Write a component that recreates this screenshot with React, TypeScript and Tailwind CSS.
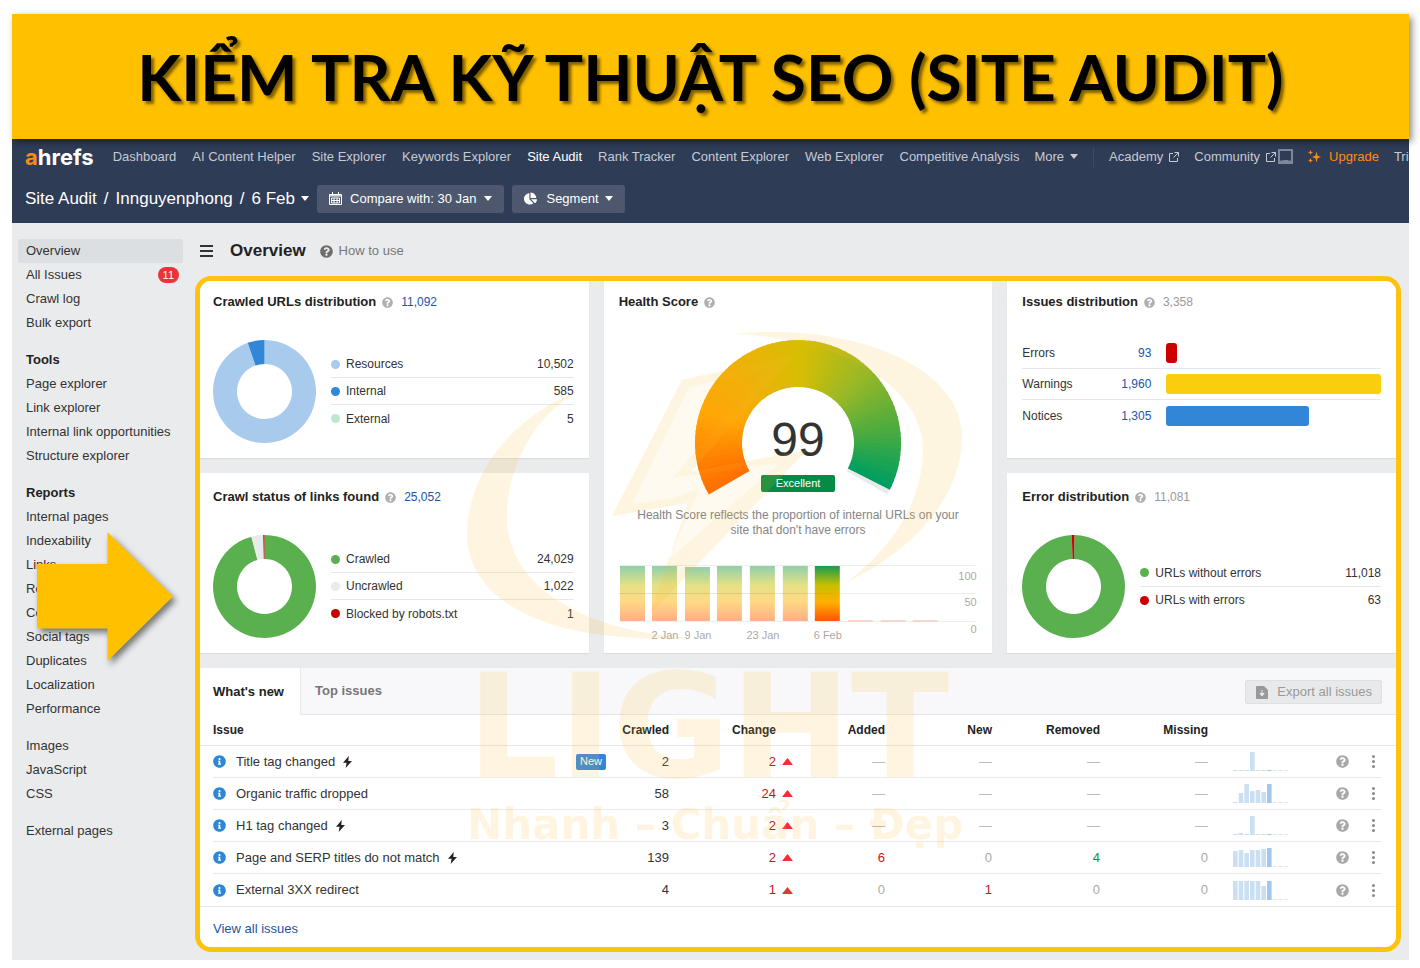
import type { ReactNode } from "react";
import clsx from "clsx";
import { FaChartPie, FaInfoCircle, FaQuestionCircle } from "react-icons/fa";

interface Slice {
  label: string;
  value: string;
  share: number;
  color: string;
}

interface Issue {
  name: string;
  bolt?: boolean;
  isNew?: boolean;
  crawled: number;
  change: number;
  added: number | null;
  fresh: number | null;
  removed: number | null;
  missing: number | null;
  trend: number[];
}

const navItems = [
  "Dashboard",
  "AI Content Helper",
  "Site Explorer",
  "Keywords Explorer",
  "Site Audit",
  "Rank Tracker",
  "Content Explorer",
  "Web Explorer",
  "Competitive Analysis",
];

const sidebarGroups: { title?: string; items: string[] }[] = [
  { items: ["Overview", "All Issues", "Crawl log", "Bulk export"] },
  {
    title: "Tools",
    items: [
      "Page explorer",
      "Link explorer",
      "Internal link opportunities",
      "Structure explorer",
    ],
  },
  {
    title: "Reports",
    items: [
      "Internal pages",
      "Indexability",
      "Links",
      "Redirects",
      "Content",
      "Social tags",
      "Duplicates",
      "Localization",
      "Performance",
    ],
  },
  { items: ["Images", "JavaScript", "CSS"] },
  { items: ["External pages"] },
];

const crawledUrls: Slice[] = [
  { label: "Resources", value: "10,502", share: 0.947, color: "#a8cbed" },
  { label: "Internal", value: "585", share: 0.053, color: "#3186d8" },
  { label: "External", value: "5", share: 0, color: "#bfe6d0" },
];

const crawlStatus: Slice[] = [
  { label: "Crawled", value: "24,029", share: 0.959, color: "#5ab04f" },
  { label: "Uncrawled", value: "1,022", share: 0.037, color: "#e9eaeb" },
  { label: "Blocked by robots.txt", value: "1", share: 0.004, color: "#c80000" },
];

const errorSplit: Slice[] = [
  { label: "URLs without errors", value: "11,018", share: 0.992, color: "#5ab04f" },
  { label: "URLs with errors", value: "63", share: 0.008, color: "#c80000" },
];

const issueLevels = [
  { label: "Errors", value: "93", width: 5, color: "#cc0000" },
  { label: "Warnings", value: "1,960", width: 100, color: "#facd0d" },
  { label: "Notices", value: "1,305", width: 66.6, color: "#3186d8" },
];

const issues: Issue[] = [
  { name: "Title tag changed", bolt: true, isNew: true, crawled: 2, change: 2, added: null, fresh: null, removed: null, missing: null, trend: [1, 1, 1, 19, 1, 1, 1] },
  { name: "Organic traffic dropped", crawled: 58, change: 24, added: null, fresh: null, removed: null, missing: null, trend: [1, 10, 19, 12, 13, 11, 19] },
  { name: "H1 tag changed", bolt: true, crawled: 3, change: 2, added: null, fresh: null, removed: null, missing: null, trend: [1, 2, 1, 19, 1, 1, 1] },
  { name: "Page and SERP titles do not match", bolt: true, crawled: 139, change: 2, added: 6, fresh: 0, removed: 4, missing: 0, trend: [16, 17, 14, 17, 17, 18, 19] },
  { name: "External 3XX redirect", crawled: 4, change: 1, added: 0, fresh: 1, removed: 0, missing: 0, trend: [19, 19, 19, 19, 19, 14, 19] },
];

const gaugeStops: [number, number[]][] = [
  [0, [255, 106, 0]],
  [0.2, [255, 166, 4]],
  [0.38, [234, 180, 8]],
  [0.52, [214, 190, 4]],
  [0.7, [150, 184, 40]],
  [0.85, [78, 172, 62]],
  [1, [0, 158, 96]],
];

function gaugeColor(t: number) {
  const i = Math.max(1, gaugeStops.findIndex(([pos]) => pos >= t));
  const [p0, c0] = gaugeStops[i - 1];
  const [p1, c1] = gaugeStops[i];
  const k = (t - p0) / (p1 - p0);
  return `rgb(${c0.map((c, n) => Math.round(c + (c1[n] - c) * k)).join(",")})`;
}

// Ring segment around 0,0. Angles are in degrees, clockwise from 3 o'clock.
function ring(outer: number, inner: number, from: number, to: number) {
  const pt = (r: number, deg: number) => {
    const a = (deg * Math.PI) / 180;
    return `${(r * Math.cos(a)).toFixed(2)} ${(r * Math.sin(a)).toFixed(2)}`;
  };
  const large = to - from > 180 ? 1 : 0;
  return `M${pt(outer, from)}A${outer} ${outer} 0 ${large} 1 ${pt(outer, to)}L${pt(inner, to)}A${inner} ${inner} 0 ${large} 0 ${pt(inner, from)}Z`;
}

function Caret({ className }: { className?: string }) {
  return (
    <svg viewBox="0 0 8 5" className={clsx("h-[5px] w-2 shrink-0", className)} fill="currentColor">
      <path d="M0 0h8L4 5z" />
    </svg>
  );
}

function ExternalIcon() {
  return (
    <svg viewBox="0 0 10 10" className="size-[10px]" fill="none" stroke="currentColor">
      <path d="M4 1.5H.5v8h8V6M5.5.5h4v4M9.5.5 4.5 5.5" />
    </svg>
  );
}

function Help({ className }: { className: string }) {
  return <FaQuestionCircle className={clsx("shrink-0", className)} />;
}

export default function App() {
  return (
    <div className="bg-white pt-[14px] pr-[11px] pb-2 pl-3 font-['Liberation_Sans',Arial,sans-serif] text-[13px] text-[#333]">
      <header className="relative z-10 flex h-[125px] items-center justify-center bg-[#ffc000] shadow-[3px_3px_7px_rgba(0,0,0,0.45)]">
        <h1 className="whitespace-nowrap font-['Lato','Inter',sans-serif] text-[64px] leading-[74px] font-bold text-black [text-shadow:3px_3px_3px_rgba(0,0,0,0.5)]">
          KIỂM TRA KỸ THUẬT SEO (SITE AUDIT)
        </h1>
      </header>
      <TopBar />
      <div className="relative flex bg-[#eaebed] pb-2">
        <Sidebar />
        <main className="min-w-0 flex-1 pr-2">
          <div className="flex h-[53px] items-center pt-[3px] pl-[5px]">
            <button aria-label="Toggle menu" className="flex flex-col gap-[3px]">
              <span className="h-[2px] w-[13px] bg-[#333]" />
              <span className="h-[2px] w-[13px] bg-[#333]" />
              <span className="h-[2px] w-[13px] bg-[#333]" />
            </button>
            <h2 className="ml-[17px] text-[17px] font-bold text-[#222]">Overview</h2>
            <a href="#how" className="ml-[14px] flex items-center gap-[6px] text-[#777]">
              <Help className="size-[13px] text-[#6d6d6d]" />
              How to use
            </a>
          </div>
          <div className="relative overflow-hidden rounded-[16px] border-[5px] border-[#ffc20e]">
            <Cards />
            <IssuesPanel />
            <Watermark />
          </div>
        </main>
        <svg
          viewBox="0 0 136 129"
          className="absolute top-[309px] left-[25px] w-[136px] drop-shadow-[3px_4px_3px_rgba(0,0,0,0.5)]"
        >
          <path d="M0 32h70.500V0L136 64.500 70.500 129V96.500H0z" fill="#ffc000" />
        </svg>
      </div>
    </div>
  );
}

function TopBar() {
  return (
    <div className="overflow-hidden bg-[#2f3c56] whitespace-nowrap">
      <nav className="flex h-[35px] items-center gap-[15px] pl-[13px] text-[#c6cad2]">
        <a href="#home" className="mr-1 w-[69px] font-['Inter',sans-serif] text-[22px] leading-6 font-bold text-white">
          <span className="text-[#ff8a13]">a</span>hrefs
        </a>
        <div className="flex gap-4">
          {navItems.map((item) => (
            <a key={item} href="#nav" className={item === "Site Audit" ? "text-white" : undefined}>
              {item}
            </a>
          ))}
        </div>
        <button className="flex items-center gap-[6px]">
          More <Caret />
        </button>
        <span className="h-5 w-px shrink-0 bg-[#3f4b63]" />
        <a href="#academy" className="flex items-center gap-[6px]">
          Academy <ExternalIcon />
        </a>
        <a href="#community" className="flex items-center gap-[6px]">
          Community
          <span className="flex items-center">
            <ExternalIcon />
            <svg viewBox="0 0 15 15" className="ml-[2px] size-[15px] text-[#7d8799]" fill="none" stroke="currentColor" strokeWidth="2">
              <path d="M1 1h13v13H1z" />
              <path d="M1 12.500h13M5 12h5" />
            </svg>
          </span>
        </a>
        <a href="#upgrade" className="flex items-center gap-2 text-[#ff8a13]">
          <svg viewBox="0 0 13 13" className="size-[13px]" fill="currentColor">
            <path d="M8.500 1.500 9.600 5.800 13 7l-3.400 1.200-1.100 4.300-1.100-4.300L4 7l3.400-1.200zM2.500 0l.7 1.800L5 2.500l-1.800.7L2.500 5l-.7-1.800L0 2.500l1.800-.7zM2.500 8l.7 1.800 1.800.7-1.800.7L2.500 13l-.7-1.800L0 10.500l1.800-.7z" />
          </svg>
          Upgrade
        </a>
        <span>Trial</span>
      </nav>
      <div className="flex h-[49px] items-center pl-[13px] text-white">
        <div className="flex items-center gap-[7px] text-[17px]">
          <a href="#audit">Site Audit</a>
          <span>/</span>
          <a href="#project">Innguyenphong</a>
          <span>/</span>
          <button className="flex items-center gap-[6px]">
            6 Feb <Caret />
          </button>
        </div>
        <button className="ml-2 flex h-7 items-center rounded-[3px] bg-[#4d586e] px-3">
          <svg viewBox="0 0 13 13" className="size-[13px]" fill="none" stroke="currentColor">
            <path d="M.5 2.500h12v10H.5zM.5 3h12M.5 4h12M3.500 0v3M9.500 0v3" />
            <path d="M2.500 6h8v5h-8zM2.500 8.500h8M5 6v5M8 6v5" />
          </svg>
          <span className="ml-2">Compare with: 30 Jan</span>
          <Caret className="ml-2" />
        </button>
        <button className="ml-2 flex h-7 items-center rounded-[3px] bg-[#4d586e] px-3">
          <FaChartPie className="size-[13px]" />
          <span className="ml-[9px]">Segment</span>
          <Caret className="ml-[6px]" />
        </button>
      </div>
    </div>
  );
}

function Sidebar() {
  return (
    <nav className="w-[183px] shrink-0 pt-4 pr-3 pl-[6px]">
      {sidebarGroups.map((group, i) => (
        <div key={i} className="mb-[13px]">
          {group.title && (
            <h3 className="pl-2 leading-6 font-bold text-[#222]">{group.title}</h3>
          )}
          {group.items.map((item) => (
            <a
              key={item}
              href="#section"
              className={clsx(
                "flex h-6 items-center justify-between rounded-[2px] pr-1 pl-2 whitespace-nowrap",
                item === "Overview" && "bg-[#dcdfe2]",
              )}
            >
              {item}
              {item === "All Issues" && (
                <span className="flex h-4 items-center rounded-full bg-[#eb3338] px-[5px] text-[11px] text-white">
                  11
                </span>
              )}
            </a>
          ))}
        </div>
      ))}
    </nav>
  );
}

function CardTitle({ title, total, link }: { title: string; total?: string; link?: boolean }) {
  return (
    <div className="flex h-5 items-center">
      <h3 className="font-bold text-[#222]">{title}</h3>
      <Help className="ml-[6px] size-[11px] text-[#b0b0b0]" />
      {total &&
        (link ? (
          <a href="#total" className="ml-2 text-[12px] text-[#1a55a5]">{total}</a>
        ) : (
          <span className="ml-2 text-[12px] text-[#999]">{total}</span>
        ))}
    </div>
  );
}

function Donut({ slices }: { slices: Slice[] }) {
  // The last sliver of the error donut straddles 12 o'clock
  let angle = slices.length === 2 ? -89 : -90;
  return (
    <svg viewBox="-51.500 -51.500 103 103" className="size-[103px] shrink-0">
      {slices.map((s) => {
        const from = angle;
        angle += s.share * 360;
        return s.share > 0 && <path key={s.label} d={ring(51.5, 27.5, from, angle)} fill={s.color} />;
      })}
    </svg>
  );
}

function DonutCard({
  title,
  total,
  link,
  slices,
  className,
}: {
  title: string;
  total: string;
  link?: boolean;
  slices: Slice[];
  className: string;
}) {
  return (
    <section className={clsx("bg-white pb-[15px] shadow-[0_1px_1px_rgba(0,0,0,0.06)]", className)}>
      <CardTitle title={title} total={total} link={link} />
      <div className="mt-7 flex items-center gap-[15px]">
        <Donut slices={slices} />
        <ul className="flex-1 divide-y divide-[#e6e7e9] text-[12px]">
          {slices.map((s) => (
            <li key={s.label} className="flex h-[27px] items-center">
              <span className="size-[9px] rounded-full" style={{ background: s.color }} />
              <span className="ml-[6px] flex-1">{s.label}</span>
              <span>{s.value}</span>
            </li>
          ))}
        </ul>
      </div>
    </section>
  );
}

function Cards() {
  return (
    <div className="grid grid-cols-3 gap-[15px] bg-[#eaebed] pb-[15px]">
      <div className="flex flex-col gap-[15px]">
        <DonutCard title="Crawled URLs distribution" total="11,092" link slices={crawledUrls} className="pt-[11px] pr-[15px] pl-[13px]" />
        <DonutCard title="Crawl status of links found" total="25,052" link slices={crawlStatus} className="pt-[14px] pr-[15px] pl-[13px]" />
      </div>
      <HealthCard />
      <div className="flex flex-col gap-[15px]">
        <section className="flex-1 bg-white px-[15px] pt-[11px] shadow-[0_1px_1px_rgba(0,0,0,0.06)]">
          <CardTitle title="Issues distribution" total="3,358" />
          <ul className="mt-[26px] divide-y divide-[#e6e7e9] text-[12px]">
            {issueLevels.map((level) => (
              <li key={level.label} className="flex h-[31px] items-center">
                <span className="w-[84px]">{level.label}</span>
                <a href="#level" className="w-[45px] text-right text-[#1a55a5]">{level.value}</a>
                <span className="ml-[15px] flex-1">
                  <span
                    className="block h-5 rounded-[3px]"
                    style={{ width: `${level.width}%`, background: level.color }}
                  />
                </span>
              </li>
            ))}
          </ul>
        </section>
        <DonutCard title="Error distribution" total="11,081" slices={errorSplit} className="px-[15px] pt-[14px]" />
      </div>
    </div>
  );
}

function HealthCard() {
  const steps = 79;
  return (
    <section className="bg-white px-[15px] pt-[11px] shadow-[0_1px_1px_rgba(0,0,0,0.06)]">
      <CardTitle title="Health Score" />
      <div className="relative mt-7">
        <svg viewBox="-103 -103 206 155" className="mx-auto h-[155px] w-[206px]">
          <path d={ring(103, 56, 26, 30)} fill="#e9eaeb" />
          {Array.from({ length: steps }, (_, i) => {
            const from = -210 + i * 3;
            const to = i === steps - 1 ? from + 3 : from + 4;
            return <path key={i} d={ring(103, 56, from, to)} fill={gaugeColor(i / (steps - 1))} />;
          })}
        </svg>
        <div className="absolute inset-x-0 top-[76px] flex flex-col items-center">
          <span className="text-[48px] leading-[48px] text-[#333]">99</span>
          <span className="mt-[11px] flex h-[17px] items-center rounded-[2px] bg-[#058b45] px-[15px] text-[11px] text-white">
            Excellent
          </span>
        </div>
      </div>
      <p className="mt-[13px] text-center text-[12px] leading-[15px] text-[#858585]">
        Health Score reflects the proportion of internal URLs on your
        <br />
        site that don't have errors
      </p>
      <HistoryChart />
    </section>
  );
}

function HistoryChart() {
  return (
    <svg viewBox="0 0 359 80" className="mt-[26px] w-full">
      <defs>
        <linearGradient id="score" x1="0" y1="0" x2="0" y2="1">
          <stop offset="0" stopColor="#169c50" />
          <stop offset="0.35" stopColor="#c8c000" />
          <stop offset="0.65" stopColor="#ffb000" />
          <stop offset="1" stopColor="#ff5500" />
        </linearGradient>
      </defs>
      <path d="M0 1.500h357M0 29.500h357M0 57.500h357" stroke="#eceded" />
      {[1, 33, 66, 98, 131, 164, 196].map((x, i) => (
        <rect key={x} x={x} y={i === 2 ? 3 : 2} width={25} height={i === 2 ? 54 : 55} fill="url(#score)" opacity={i === 6 ? 1 : 0.48} />
      ))}
      <path d="M0 29.500h215" stroke="#000" strokeOpacity="0.05" />
      <path d="M229 57h25M262 57h25M294 57h25" stroke="#f5b9a0" />
      <g fontSize="11" fill="#aaa" textAnchor="middle">
        <text x="46" y="75">2 Jan</text>
        <text x="79" y="75">9 Jan</text>
        <text x="144" y="75">23 Jan</text>
        <text x="209" y="75">6 Feb</text>
      </g>
      <g fontSize="11" fill="#aaa" textAnchor="end">
        <text x="358" y="16">100</text>
        <text x="358" y="42">50</text>
        <text x="358" y="69">0</text>
      </g>
    </svg>
  );
}

function Sparkline({ values }: { values: number[] }) {
  return (
    <svg viewBox="0 0 56 19" className="h-[19px] w-14">
      {values.map((v, i) => (
        <rect key={i} x={i * 5.67} y={19 - v} width="4.600" height={v} fill={i === 6 ? "#a3c7ea" : "#cbdff3"} />
      ))}
      <path d="M39.500 18.500h4.400M45.200 18.500h4.400M50.900 18.500h4.400" stroke="#e4e7ea" />
    </svg>
  );
}

function Count({ value, tone }: { value: number | null; tone: string }) {
  if (value === null) return <span className="text-[#bbb]">—</span>;
  return <span className={value === 0 ? "text-[#aaa]" : tone}>{value}</span>;
}

function Cell({ children }: { children: ReactNode }) {
  return (
    <td className="border-[#e9eaec] p-0 text-right group-not-last:border-b">
      {children}
    </td>
  );
}

function IssuesPanel() {
  return (
    <section className="bg-white">
      <div className="flex h-[47px] border-b border-[#e6e7e9] bg-[#f8f8fb]">
        <button className="-mb-px w-[101px] border-r border-[#e6e7e9] bg-white pl-[13px] text-left font-bold text-[#222]">
          What's new
        </button>
        <button className="px-[14px] font-bold text-[#777]">Top issues</button>
        <button className="mt-3 mr-[14px] ml-auto flex h-6 items-center gap-2 rounded-[2px] border border-[#dfe0e2] bg-[#e8e9eb] px-[9px] text-[#999]">
          <svg viewBox="0 0 12 13" className="mx-px h-[13px] w-3">
            <path d="M1 0h7l4 4v8a1 1 0 0 1-1 1H1a1 1 0 0 1-1-1V1a1 1 0 0 1 1-1z" fill="#999" />
            <path d="M6 4v4M4 7.500 6 10l2-2.500z" stroke="#e8e9eb" fill="#e8e9eb" />
          </svg>
          Export all issues
        </button>
      </div>
      <table className="w-full table-fixed border-separate border-spacing-0">
        <colgroup>
          <col />
          <col className="w-[61px]" />
          <col className="w-[124px]" />
          <col className="w-[92px]" />
          <col className="w-[107px]" />
          <col className="w-[108px]" />
          <col className="w-[108px]" />
          <col className="w-[100px]" />
          <col className="w-[41px]" />
          <col className="w-[47px]" />
        </colgroup>
        <thead>
          <tr className="h-[31px] text-right text-[12px] text-[#222] *:border-b *:border-[#e6e7e9] *:p-0">
            <th className="text-left"><span className="pl-[13px]">Issue</span></th>
            <th>Crawled</th>
            <th><span className="pr-[17px]">Change</span></th>
            <th>Added</th>
            <th>New</th>
            <th>Removed</th>
            <th>Missing</th>
            <th colSpan={3} />
          </tr>
        </thead>
        <tbody>
          {issues.map((issue) => (
            <tr key={issue.name} className="group h-8">
              <td className="p-0 pl-[13px]">
                <div className="flex h-8 items-center border-[#e9eaec] pr-[2px] group-not-last:border-b">
                  <FaInfoCircle className="size-[13px] text-[#2f86d6]" />
                  <a href="#issue" className="ml-[10px]">{issue.name}</a>
                  {issue.bolt && (
                    <svg viewBox="0 0 9 12" className="ml-2 h-3 w-[9px]" fill="#222">
                      <path d="M5.800 0 0 6.800h3.600L2.600 12 9 4.900H5.300z" />
                    </svg>
                  )}
                  {issue.isNew && (
                    <span className="ml-auto flex h-4 items-center rounded-[2px] bg-[#3186d8] px-1 text-[11px] text-white">
                      New
                    </span>
                  )}
                </div>
              </td>
              <Cell>{issue.crawled}</Cell>
              <Cell>
                <span className="flex items-center justify-end gap-[6px] text-[#c4161c]">
                  {issue.change}
                  <svg viewBox="0 0 11 7" className="h-[7px] w-[11px]" fill="#ea3335">
                    <path d="M5.500 0 11 7H0z" />
                  </svg>
                </span>
              </Cell>
              <Cell><Count value={issue.added} tone="text-[#c4161c]" /></Cell>
              <Cell><Count value={issue.fresh} tone="text-[#c4161c]" /></Cell>
              <Cell><Count value={issue.removed} tone="text-[#0f9043]" /></Cell>
              <Cell><Count value={issue.missing} tone="text-[#333]" /></Cell>
              <Cell>
                <div className="pl-[25px]"><Sparkline values={issue.trend} /></div>
              </Cell>
              <Cell>
                <Help className="ml-auto size-[13px] text-[#a8a8a8]" />
              </Cell>
              <td className="p-0 pr-[14px]">
                <div className="flex h-8 items-center justify-end border-[#e9eaec] pr-[7px] group-not-last:border-b">
                  <button aria-label="Row menu" className="flex flex-col gap-[2px]">
                    <span className="size-[3px] rounded-full bg-[#8b8b8b]" />
                    <span className="size-[3px] rounded-full bg-[#8b8b8b]" />
                    <span className="size-[3px] rounded-full bg-[#8b8b8b]" />
                  </button>
                </div>
              </td>
            </tr>
          ))}
        </tbody>
      </table>
      <div className="flex h-[41px] items-center border-t border-[#e6e7e9] pt-1 pl-[13px]">
        <a href="#all" className="text-[#1a55a5]">View all issues</a>
      </div>
    </section>
  );
}

function Watermark() {
  return (
    <div className="pointer-events-none absolute top-[49px] left-[267px] w-[500px] text-[#f9bd2e] opacity-15">
      <svg viewBox="467 330 500 310" className="h-[310px] w-[500px]" fill="currentColor">
        <path d="M580 390C505 420 467 480 467 535C468 600 545 645 690 638C590 632 507 590 507 517C507 465 535 415 580 390z" />
        <path d="M735 334C850 322 962 365 962 437C962 495 915 550 847 582C895 545 923 500 923 447C920 385 840 338 735 334z" />
        <path fillRule="evenodd" d="M682 380 795 355 690 472 807 450 650 614 688 503 612 516zM689 387 632 504 672 498 700 488 668 560 780 463 672 478 770 369z" />
        <path opacity="0.5" d="M682 380 795 355 690 472 807 450 650 614 688 503 612 516z" />
      </svg>
      <div className="font-['DejaVu_Sans',sans-serif] font-bold whitespace-nowrap">
        <p className="pt-3 text-[144px] leading-[150px]">LIGHT</p>
        <p className="text-[42px] leading-[46px]">Nhanh – Chuẩn – Đẹp</p>
      </div>
    </div>
  );
}
